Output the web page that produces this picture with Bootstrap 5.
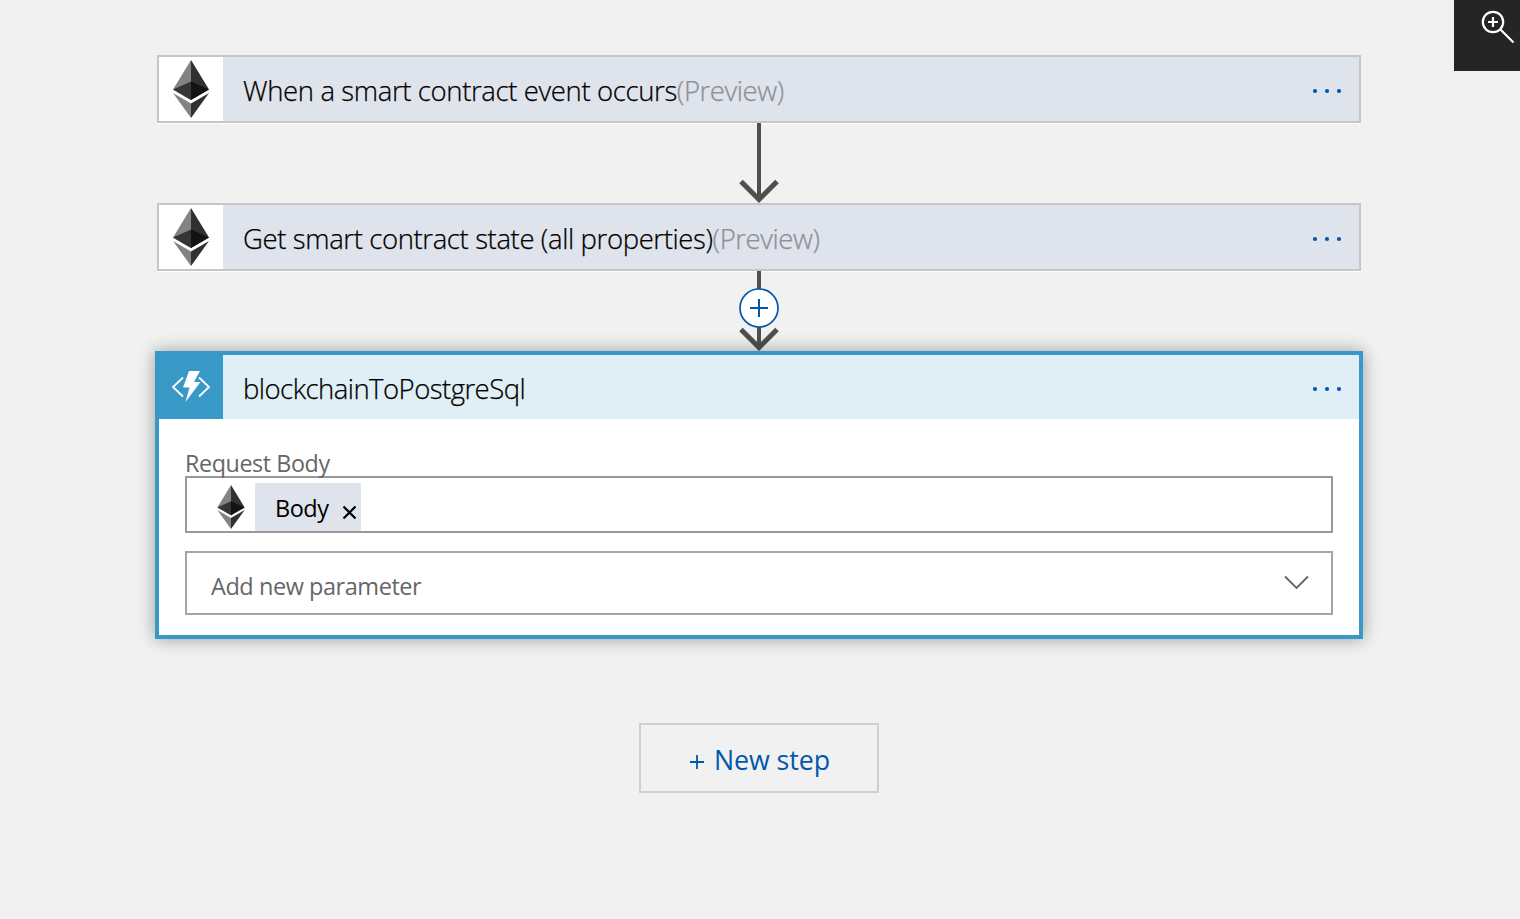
<!DOCTYPE html>
<html lang="en">
<head>
<meta charset="utf-8">
<meta name="viewport" content="width=device-width, initial-scale=1">
<title>Logic app designer</title>
<link href="https://cdn.jsdelivr.net/npm/bootstrap@5.3.0/dist/css/bootstrap.min.css" rel="stylesheet">
<style>
  body { background: #f1f1f1; font-family: "Open Sans", "Noto Sans", sans-serif; color: #000; height: 919px; overflow: hidden; }
  .flow { width: 1208px; margin-left: 155px; padding-top: 55px; }
  .step { width: 1204px; height: 68px; border: 2px solid #c6c6c6; background: #dfe3ec; box-shadow: 0 1px 0 #fff; }
  .step-icon { width: 64px; height: 64px; background: #fff; }
  .step-title { font-size: 27.5px; line-height: 36px; font-weight: 300; padding: 4px 0 0 20px; white-space: nowrap; -webkit-text-stroke: .25px; }
  .preview { color: #8d9097; letter-spacing: -.42px; }
  .t1 { letter-spacing: -.37px; }
  .t2 { letter-spacing: -.38px; }
  .t3 { letter-spacing: -.53px; }
  .t4 { letter-spacing: -.4px; }
  .t5 { letter-spacing: -.5px; }
  .t6 { letter-spacing: -.45px; }
  .t7 { letter-spacing: -.1px; }
  .connector { height: 80px; }
  .connector svg { display: block; }
  .step-more { width: 30px; height: 6px; margin-right: 17px; margin-top: 4px; fill: #0058ad; }
  .step-open { width: 1208px; height: 288px; border: 4px solid #3999c6; background: #fff; box-shadow: 0 0 16px rgba(0,0,0,.36); }
  .step-open-head { height: 64px; background: #e0eff6; }
  .fn-icon { width: 68px; height: 68px; margin: -4px 0 0 -4px; background: #3999c6; align-self: flex-start; }
  .fields { padding: 29px 26px 0; }
  .field-label { font-size: 23.3px; line-height: 30px; height: 28px; color: #666; }
  .field { height: 57px; border: 2px solid #999; padding-left: 28px; }
  .field-icon { width: 40px; padding: 7px 8px 0 0; }
  .token { width: 106px; height: 48px; background: #dfe3ec; margin-top: 5px; padding: 3px 4px 0 20px; font-size: 23.5px; }
  .picker { height: 64px; border: 2px solid #a5a5a5; margin-top: 18px; padding: 7px 22px 0 24px; font-size: 23.5px; color: #666; }
  .picker svg { margin-top: -8px; }
  .new-step { width: 240px; height: 70px; margin-top: 84px; border: 2px solid #d0d0d0; border-radius: 0; color: #0058ad; font-size: 26.8px; padding: 5px 0 0; }
  .magnify { width: 66px; height: 71px; background: #252525; }
</style>
</head>
<body>
<svg class="d-none">
  <symbol id="eth" viewBox="0 0 36 58">
    <path fill="#828384" d="M18 0v40L0 29.5z"/>
    <path fill="#2f3030" d="M18 0v40l18-10.500z"/>
    <path fill="#343535" d="M18 21.500v18.500L0 29.500z"/>
    <path fill="#131313" d="M18 21.500v18.500l18-10.500z"/>
    <path fill="#828384" d="M0 33l18 10.500V58z"/>
    <path fill="#2f3030" d="M36 33L18 43.500V58z"/>
  </symbol>
  <symbol id="dots" viewBox="0 0 30 6">
    <circle cx="3" cy="3" r="2.100"/><circle cx="15" cy="3" r="2.100"/><circle cx="27" cy="3" r="2.100"/>
  </symbol>
</svg>

<main class="flow d-flex flex-column align-items-center">
  <section class="step d-flex align-items-center">
    <div class="step-icon d-flex align-items-center justify-content-center"><svg width="36" height="58"><use href="#eth"/></svg></div>
    <div class="step-title"><span class="t1">When a smart contract event occurs</span><span class="preview">(Preview)</span></div>
    <svg class="step-more ms-auto"><use href="#dots"/></svg>
  </section>

  <div class="connector">
    <svg width="44" height="80" fill="none" stroke="#4f4f4f" stroke-width="4"><path d="M22 0v77"/><path stroke-width="5" d="M4 58.500L22 76.500 40 58.500"/></svg>
  </div>

  <section class="step d-flex align-items-center">
    <div class="step-icon d-flex align-items-center justify-content-center"><svg width="36" height="58"><use href="#eth"/></svg></div>
    <div class="step-title"><span class="t2">Get smart contract state (all properties)</span><span class="preview">(Preview)</span></div>
    <svg class="step-more ms-auto"><use href="#dots"/></svg>
  </section>

  <div class="connector">
    <svg width="44" height="80" fill="none" stroke="#4f4f4f" stroke-width="4"><path d="M22 0v77"/><path stroke-width="5" d="M4 58.500L22 76.500 40 58.500"/><circle cx="22" cy="37" r="19" fill="#fff" stroke="#0058ad" stroke-width="1.700"/><path stroke="#0058ad" stroke-width="2" d="M13 37h18M22 28v18"/></svg>
  </div>

  <section class="step-open">
    <div class="step-open-head d-flex align-items-center">
      <div class="fn-icon d-flex"><svg width="68" height="68" fill="none" stroke="#fff" stroke-width="1.800"><path d="M28 26.500L18 36l10 9.500M44 26.500L54 36l-10 9.500"/><path fill="#fff" stroke="none" d="M34 20h11l-6 11h6.500L30.500 51l4-14.500H28z"/></svg></div>
      <div class="step-title"><span class="t3">blockchainToPostgreSql</span></div>
      <svg class="step-more ms-auto"><use href="#dots"/></svg>
    </div>
    <div class="fields">
      <div class="field-label"><span class="t4">Request Body</span></div>
      <div class="field d-flex align-items-start">
        <div class="field-icon d-flex"><svg width="32" height="44"><use href="#eth"/></svg></div>
        <div class="token d-flex align-items-center"><span class="t5">Body</span><svg class="ms-auto mt-2" width="15" height="15" stroke="#000" stroke-width="2.200"><path d="M1.500 1.500l12 12M13.500 1.500l-12 12"/></svg></div>
      </div>
      <div class="picker d-flex align-items-center"><span class="t6">Add new parameter</span><svg class="ms-auto" width="25" height="15" fill="none" stroke="#666" stroke-width="1.900"><path d="M1 1.500l11.500 11.500L24 1.500"/></svg></div>
    </div>
  </section>

  <button class="btn new-step d-flex align-items-center justify-content-center"><svg class="me-2" width="18" height="18" stroke="#0058ad" stroke-width="1.800"><path d="M2 10h14M9 3v14"/></svg><span class="t7">New step</span></button>
</main>

<div class="magnify position-absolute top-0 end-0">
  <svg width="66" height="71" fill="none" stroke="#fff" stroke-width="2.200"><circle cx="39" cy="22" r="10.200"/><path d="M46.500 29.500L59.500 42.500M34 22h10M39 17v10"/></svg>
</div>
<script src="https://cdn.jsdelivr.net/npm/bootstrap@5.3.0/dist/js/bootstrap.bundle.min.js"></script>
</body>
</html>
